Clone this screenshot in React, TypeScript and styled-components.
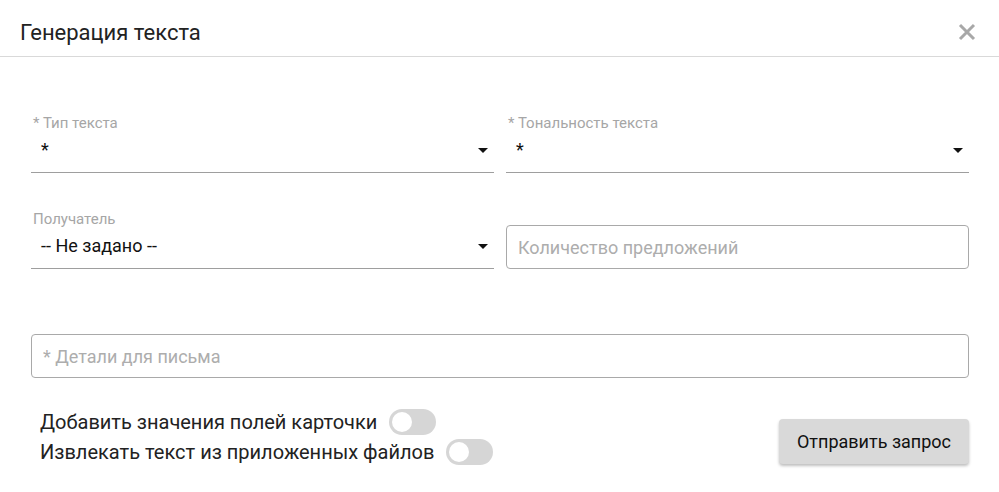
import React from "react";
import styled, { createGlobalStyle } from "styled-components";

const GlobalStyle = createGlobalStyle`
  html, body {
    margin: 0;
    padding: 0;
    background: #fff;
    font-family: Roboto, "Noto Sans", sans-serif;
  }
`;

const Dialog = styled.div`
  width: 999px;
  height: 492px;
  background: #fff;
  box-sizing: border-box;
`;

const Header = styled.div`
  height: 57px;
  box-sizing: border-box;
  display: flex;
  align-items: center;
  justify-content: space-between;
  padding: 8px 22px 0 20px;
  border-bottom: 1px solid #d9d9d9;
`;

const Title = styled.h2`
  margin: 0;
  font-size: 22px;
  font-weight: 400;
  color: #222;
`;

const CloseButton = styled.button`
  border: none;
  background: none;
  padding: 0;
  width: 20px;
  height: 20px;
  display: flex;
  align-items: center;
  justify-content: center;
  cursor: pointer;
`;

const Body = styled.div`
  padding: 0 30px 0 31px;
`;

const Grid = styled.div`
  display: grid;
  grid-template-columns: 1fr 1fr;
  column-gap: 12px;
`;

const SelectField = styled.div<{ $top: number }>`
  margin-top: ${(p) => p.$top}px;
  border-bottom: 1px solid #9e9e9e;
  height: 58px;
  box-sizing: border-box;
  position: relative;
`;

const FieldLabel = styled.div`
  font-size: 15px;
  color: #a6a6a6;
  padding-left: 2px;
  line-height: 16px;
`;

const SelectValue = styled.div`
  font-size: 18px;
  color: #111;
  padding-left: 10px;
  margin-top: 9px;
  line-height: 20px;
  display: flex;
  justify-content: space-between;
  align-items: center;
  padding-right: 6px;
`;

const Caret = styled.span`
  width: 0;
  height: 0;
  border-left: 5px solid transparent;
  border-right: 5px solid transparent;
  border-top: 5px solid #111;
`;

const OutlinedInput = styled.input<{ $top: number }>`
  margin-top: ${(p) => p.$top}px;
  height: 44px;
  width: 100%;
  box-sizing: border-box;
  border: 1px solid #a9a9a9;
  border-radius: 4px;
  padding: 0 11px;
  font-family: inherit;
  font-size: 18px;
  color: #111;
  outline: none;
  &::placeholder {
    color: #adadad;
  }
`;

const Footer = styled.div`
  margin-top: 31px;
  display: flex;
  justify-content: space-between;
  align-items: flex-start;
`;

const Toggles = styled.div`
  display: flex;
  flex-direction: column;
  padding-left: 9px;
  gap: 4px;
`;

const ToggleRow = styled.label`
  display: flex;
  align-items: center;
  gap: 12px;
  font-size: 20px;
  color: #222;
  height: 26px;
`;

const Switch = styled.span`
  width: 47px;
  height: 26px;
  border-radius: 13px;
  background: #d6d6d6;
  position: relative;
  flex-shrink: 0;
  &::after {
    content: "";
    position: absolute;
    left: 3px;
    top: 3px;
    width: 20px;
    height: 20px;
    border-radius: 50%;
    background: #fff;
  }
`;

const SubmitButton = styled.button`
  margin-top: 10px;
  width: 190px;
  height: 45px;
  border: none;
  border-radius: 4px;
  background: #d9d9d9;
  box-shadow: 0 2px 3px rgba(0, 0, 0, 0.25);
  font-family: inherit;
  font-size: 18px;
  color: #111;
  cursor: pointer;
`;

export default function App() {
  return (
    <>
      <GlobalStyle />
      <Dialog>
        <Header>
          <Title>Генерация текста</Title>
          <CloseButton aria-label="Закрыть">
            <svg width="18" height="18" viewBox="0 0 18 18">
              <path d="M2 2 L16 16 M16 2 L2 16" stroke="#a8a8a8" strokeWidth="3" strokeLinecap="butt" />
            </svg>
          </CloseButton>
        </Header>
        <Body>
          <Grid>
            <SelectField $top={58}>
              <FieldLabel>* Тип текста</FieldLabel>
              <SelectValue>
                <span>*</span>
                <Caret />
              </SelectValue>
            </SelectField>
            <SelectField $top={58}>
              <FieldLabel>* Тональность текста</FieldLabel>
              <SelectValue>
                <span>*</span>
                <Caret />
              </SelectValue>
            </SelectField>
            <SelectField $top={38}>
              <FieldLabel>Получатель</FieldLabel>
              <SelectValue>
                <span>-- Не задано --</span>
                <Caret />
              </SelectValue>
            </SelectField>
            <OutlinedInput $top={52} placeholder="Количество предложений" />
          </Grid>
          <OutlinedInput $top={65} placeholder="* Детали для письма" />
          <Footer>
            <Toggles>
              <ToggleRow>
                Добавить значения полей карточки
                <Switch />
              </ToggleRow>
              <ToggleRow>
                Извлекать текст из приложенных файлов
                <Switch />
              </ToggleRow>
            </Toggles>
            <SubmitButton>Отправить запрос</SubmitButton>
          </Footer>
        </Body>
      </Dialog>
    </>
  );
}
